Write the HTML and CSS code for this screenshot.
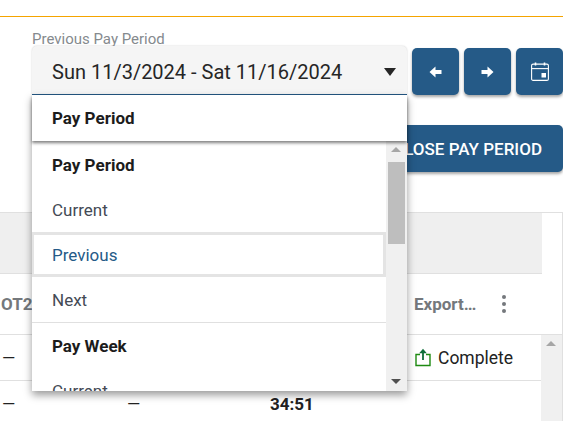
FILE: index.html
```html
<!DOCTYPE html>
<html lang="en">
<head>
    <meta charset="UTF-8">
    <title>Pay Period</title>
    <link rel="stylesheet" href="styles.css">
</head>
<body>
    <div class="page">
        <div class="top-bar"></div>

        <!-- Toolbar -->
        <div class="toolbar">
            <div class="period-field">
                <label class="period-label">Previous Pay Period</label>
                <div class="period-row">
                    <div class="period-select">
                        <span>Sun 11/3/2024 - Sat 11/16/2024</span>
                        <i class="caret"></i>

                        <!-- Open dropdown -->
                        <div class="dropdown">
                            <div class="dropdown-header">Pay Period</div>
                            <div class="dropdown-body">
                                <ul class="dropdown-list">
                                    <li class="group">Pay Period</li>
                                    <li>Current</li>
                                    <li class="selected">Previous</li>
                                    <li class="last">Next</li>
                                    <li class="group">Pay Week</li>
                                    <li>Current</li>
                                </ul>
                                <div class="scrollbar dropdown-scroll">
                                    <i class="arrow-up"></i>
                                    <div class="thumb"></div>
                                    <i class="arrow-down"></i>
                                </div>
                            </div>
                        </div>
                    </div>
                    <button class="icon-btn" aria-label="Previous">
                        <svg width="13" height="12" viewBox="0 0 13 12"><path d="M0.5 6 6.5 0.6V4H12.5V8H6.5V11.4Z" fill="#fff"/></svg>
                    </button>
                    <button class="icon-btn" aria-label="Next">
                        <svg width="13" height="12" viewBox="0 0 13 12"><path d="M12.5 6 6.5 0.6V4H0.5V8H6.5V11.4Z" fill="#fff"/></svg>
                    </button>
                    <button class="icon-btn" aria-label="Calendar">
                        <svg width="18" height="19" viewBox="0 0 18 19" fill="none" stroke="#fff" stroke-width="1.1">
                            <rect x="0.6" y="2.1" width="16.8" height="16.3" rx="1.5"/>
                            <path d="M0.6 6.6H17.4"/>
                            <path d="M4.5 0.5V3.5M13.5 0.5V3.5" stroke-width="1.6"/>
                            <rect x="10.5" y="11" width="4.5" height="4.5" fill="#fff" stroke="none"/>
                        </svg>
                    </button>
                </div>
            </div>
            <div class="close-row">
                <button class="close-btn">CLOSE PAY PERIOD</button>
            </div>
        </div>

        <!-- Table -->
        <div class="table">
            <div class="table-band"></div>
            <div class="table-head">
                <span class="col-ot2">OT2</span>
                <span class="col-export">Export…</span>
                <span class="kebab"><i></i><i></i><i></i></span>
            </div>
            <div class="table-body">
                <div class="rows">
                    <div class="row">
                        <span class="cell-a">—</span>
                        <span class="cell-status">
                            <svg width="16" height="19" viewBox="0 0 16 19" fill="none">
                                <path d="M5 6.5H1V17.5H15V6.5H11" stroke="#1f8a12" stroke-width="1.4"/>
                                <path d="M8 12V3" stroke="#0f6e3a" stroke-width="1.8"/>
                                <path d="M4.2 5.2 8 0.8 11.8 5.2Z" fill="#0f6e3a"/>
                            </svg>
                            Complete
                        </span>
                    </div>
                    <div class="row">
                        <span class="cell-a">—</span>
                        <span class="cell-b">—</span>
                        <span class="cell-total">34:51</span>
                    </div>
                </div>
                <div class="scrollbar table-scroll">
                    <i class="arrow-up"></i>
                </div>
            </div>
        </div>
    </div>
</body>
</html>
```

FILE: styles.css
```css
/* General Styles */
html, body {
    margin: 0;
    padding: 0;
    background-color: #fff;
}
body {
    font-family: Roboto, "Liberation Sans", sans-serif;
    color: #222;
    overflow: hidden;
}
.page {
    width: 563px;
    height: 421px;
    overflow: hidden;
}
.top-bar {
    height: 16px;
    border-bottom: 1px solid #f5a400;
}

/* Toolbar */
.toolbar {
    padding: 13px 0 0 32px;
}
.period-label {
    display: block;
    height: 16px;
    font-size: 15px;
    line-height: 18px;
    color: #858a8e;
}
.period-row {
    display: flex;
    align-items: flex-end;
    gap: 5px;
}
.period-select {
    position: relative;
    box-sizing: border-box;
    width: 375px;
    height: 49px;
    padding: 3px 11px 0 20px;
    display: flex;
    align-items: center;
    justify-content: space-between;
    font-size: 20px;
    color: #262626;
    background-color: #f5f5f5;
    border-radius: 5px 5px 0 0;
    border-bottom: 1px solid #255a87;
    box-shadow: 0 0 2px rgba(0, 0, 0, 0.2);
}
.caret {
    width: 0;
    height: 0;
    border-left: 6px solid transparent;
    border-right: 6px solid transparent;
    border-top: 8px solid #262626;
}
.icon-btn {
    width: 47px;
    height: 47px;
    padding: 0;
    border: 0;
    display: flex;
    align-items: center;
    justify-content: center;
    background-color: #255a87;
    border-radius: 5px;
    box-shadow: 0 2px 3px rgba(0, 0, 0, 0.35);
}
.close-row {
    display: flex;
    justify-content: flex-end;
    margin-top: 30px;
}
.close-btn {
    box-sizing: border-box;
    width: 190px;
    height: 47px;
    padding: 0 21px 0 0;
    border: 0;
    text-align: right;
    font-family: inherit;
    font-size: 17px;
    font-weight: 500;
    white-space: nowrap;
    color: #fff;
    background-color: #255a87;
    border-radius: 5px;
    box-shadow: 0 2px 3px rgba(0, 0, 0, 0.35);
}

/* Dropdown */
.dropdown {
    position: absolute;
    z-index: 5;
    top: 49px;
    left: 0;
    width: 375px;
    background-color: #fff;
    box-shadow: 0 4px 8px rgba(0, 0, 0, 0.4);
}
.dropdown-header {
    box-sizing: border-box;
    height: 46px;
    padding-left: 20px;
    font-size: 17px;
    font-weight: 700;
    line-height: 46px;
    color: #1c1c1c;
    background-color: #fff;
    box-shadow: 0 2px 3px rgba(0, 0, 0, 0.5);
    position: relative;
    z-index: 1;
}
.dropdown-body {
    display: flex;
    height: 250px;
    overflow: hidden;
}
.dropdown-list {
    flex: 1;
    margin: 0;
    padding: 0;
    list-style-type: none;
    font-size: 17px;
    color: #444a55;
}
.dropdown-list li {
    box-sizing: border-box;
    height: 45px;
    padding-left: 20px;
    line-height: 47px;
}
.dropdown-list .group {
    height: 46px;
    line-height: 49px;
    font-weight: 700;
    color: #1c1c1c;
}
.dropdown-list .selected {
    padding-left: 18px;
    line-height: 41px;
    color: #255a87;
    border: 2px solid #e4e4e4;
    border-width: 3px 3px 3px 2px;
}
.dropdown-list .last {
    height: 46px;
    border-bottom: 1px solid #e0e0e0;
}
.dropdown-list .last + .group {
    height: 45px;
    line-height: 47px;
}

/* Scrollbars */
.scrollbar {
    position: relative;
    width: 21px;
    background-color: #f0f0f0;
}
.arrow-up, .arrow-down {
    position: absolute;
    left: 5px;
    width: 0;
    height: 0;
    border-left: 5px solid transparent;
    border-right: 5px solid transparent;
}
.arrow-up {
    top: 6px;
    border-bottom: 5px solid #a6a6a6;
}
.arrow-down {
    bottom: 7px;
    border-top: 5px solid #505050;
}
.thumb {
    position: absolute;
    top: 21px;
    left: 2px;
    width: 17px;
    height: 82px;
    background-color: #bebebe;
}

/* Table */
.table {
    margin-top: 40px;
    height: 209px;
    border-top: 1px solid #e0e0e0;
    border-right: 1px solid #e0e0e0;
}
.table-band {
    width: 542px;
    height: 60px;
    background-color: #efefef;
    border-bottom: 1px solid #e0e0e0;
}
.table-head {
    height: 60px;
    display: flex;
    align-items: center;
    font-size: 17px;
    font-weight: 700;
    color: #74787c;
    border-bottom: 1px solid #e0e0e0;
}
.col-ot2 {
    width: 413px;
    margin-left: 1px;
}
.col-export {
    width: 88px;
}
.kebab {
    display: flex;
    flex-direction: column;
    gap: 3px;
}
.kebab i {
    width: 4px;
    height: 4px;
    border-radius: 50%;
    background-color: #74787c;
}
.table-body {
    display: flex;
    height: 90px;
}
.rows {
    flex: 1;
}
.row {
    height: 45px;
    display: flex;
    align-items: center;
    font-size: 17px;
    color: #222;
    border-bottom: 1px solid #e0e0e0;
}
.cell-a {
    width: 125px;
    padding-left: 2px;
    box-sizing: border-box;
}
.cell-b {
    width: 143px;
    padding-left: 2px;
    box-sizing: border-box;
}
.cell-total {
    font-weight: 700;
    margin-left: 2px;
}
.cell-status {
    display: flex;
    align-items: center;
    gap: 7px;
    margin-left: 290px;
    font-size: 17.5px;
}
.table-scroll {
    height: 90px;
}
```
